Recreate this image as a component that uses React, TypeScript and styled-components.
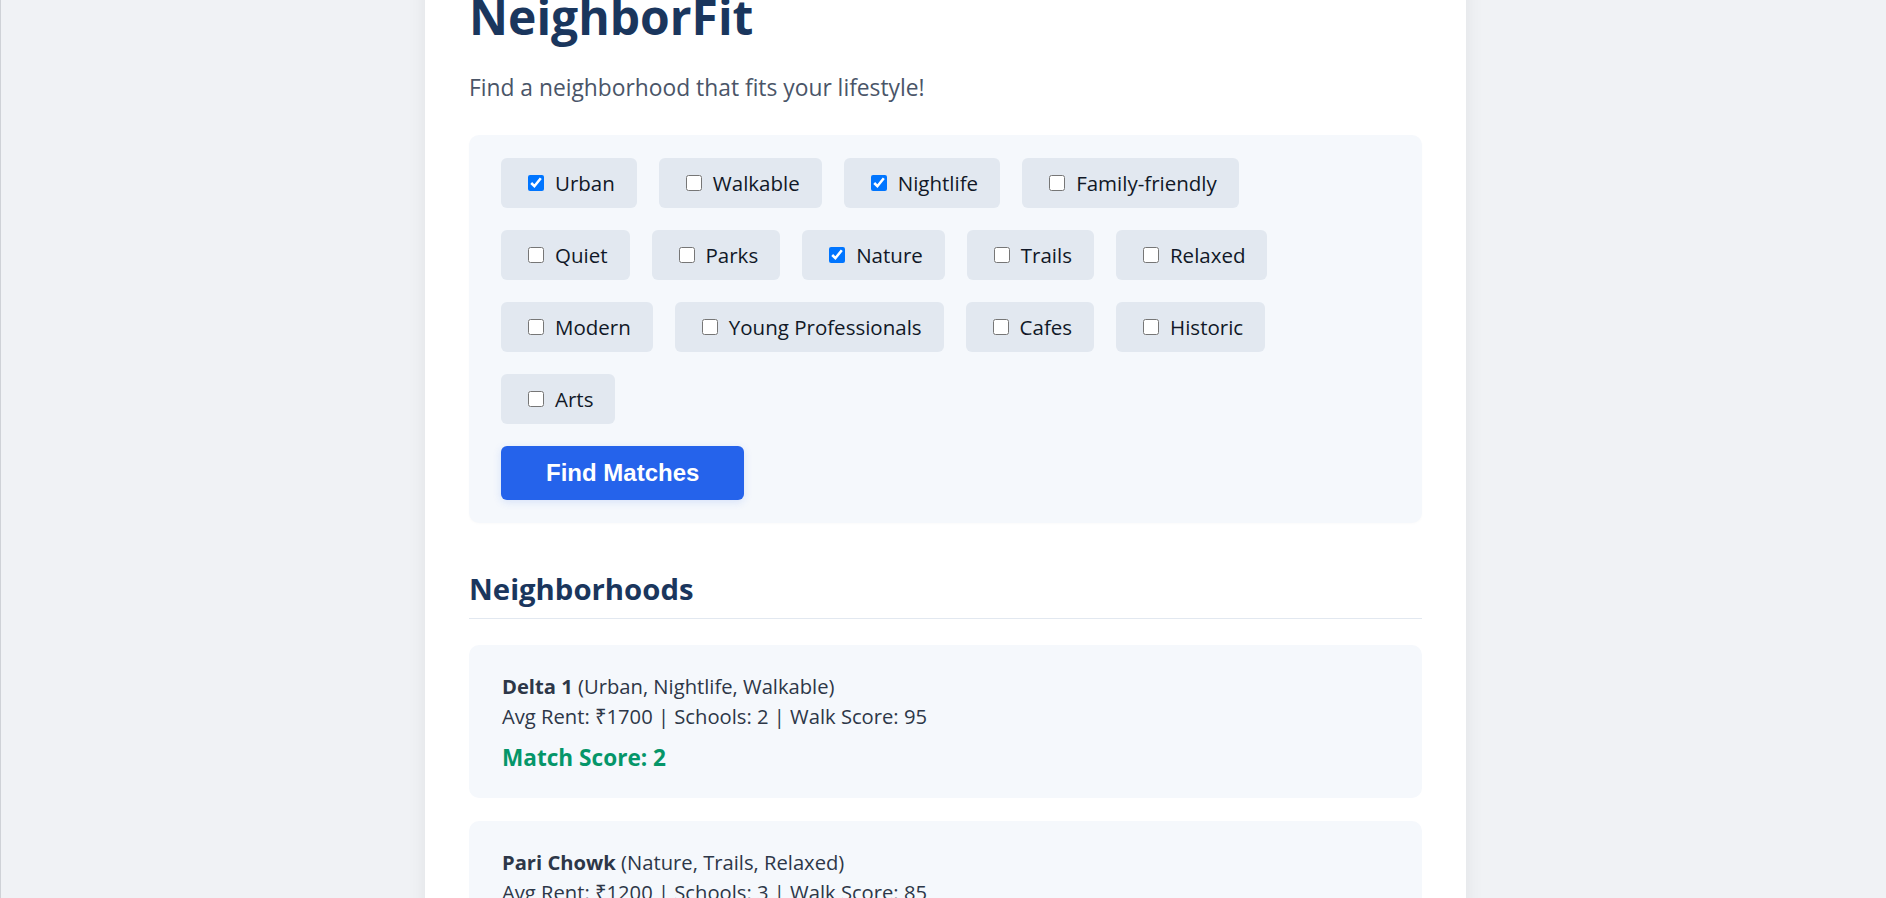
import React, { useState } from "react";
import styled, { createGlobalStyle } from "styled-components";

type Hood = {
  name: string;
  tags: string[];
  rent: number;
  schools: number;
  walk: number;
};

const TAGS = [
  "Urban",
  "Walkable",
  "Nightlife",
  "Family-friendly",
  "Quiet",
  "Parks",
  "Nature",
  "Trails",
  "Relaxed",
  "Modern",
  "Young Professionals",
  "Cafes",
  "Historic",
  "Arts",
];

const HOODS: Hood[] = [
  { name: "Delta 1", tags: ["Urban", "Nightlife", "Walkable"], rent: 1700, schools: 2, walk: 95 },
  { name: "Pari Chowk", tags: ["Nature", "Trails", "Relaxed"], rent: 1200, schools: 3, walk: 85 },
  { name: "Knowledge Park", tags: ["Modern", "Young Professionals", "Cafes"], rent: 1500, schools: 4, walk: 78 },
  { name: "Alpha 2", tags: ["Quiet", "Parks", "Family-friendly"], rent: 1300, schools: 5, walk: 70 },
];

const App = () => {
  const [picked, setPicked] = useState<string[]>(["Urban", "Nightlife", "Nature"]);

  const toggle = (tag: string) => {
    setPicked((prev) =>
      prev.includes(tag) ? prev.filter((t) => t !== tag) : [...prev, tag]
    );
  };

  const scored = HOODS.map((h) => ({
    ...h,
    score: h.tags.filter((t) => picked.includes(t)).length,
  })).sort((a, b) => b.score - a.score);

  return (
    <Page>
      <GlobalStyle />
      <Container>
        <Title>NeighborFit</Title>
        <Subtitle>Find a neighborhood that fits your lifestyle!</Subtitle>

        <Panel>
          <TagList>
            {TAGS.map((tag) => (
              <Chip key={tag}>
                <Box
                  type="checkbox"
                  checked={picked.includes(tag)}
                  onChange={() => toggle(tag)}
                />
                {tag}
              </Chip>
            ))}
          </TagList>
          <FindButton>Find Matches</FindButton>
        </Panel>

        <SectionTitle>Neighborhoods</SectionTitle>
        <CardList>
          {scored.map((h) => (
            <Card key={h.name}>
              <div>
                <strong>{h.name}</strong> ({h.tags.join(", ")})
              </div>
              <div>
                Avg Rent: ₹{h.rent} | Schools: {h.schools} | Walk Score: {h.walk}
              </div>
              <Score>Match Score: {h.score}</Score>
            </Card>
          ))}
        </CardList>
      </Container>
    </Page>
  );
};
export default App;

const GlobalStyle = createGlobalStyle`
  html, body {
    margin: 0;
    padding: 0;
  }
  body {
    background: #f0f2f5;
    border-left: 1px solid #cfd2d7;
    font-family: "Open Sans", "Noto Sans", sans-serif;
  }
`;

// the page is shown scrolled down a little
const Page = styled.div`
  padding-left: 4px;
  margin-top: -51px;
`;

const Container = styled.div`
  width: 1041px;
  box-sizing: border-box;
  margin: 0 auto;
  padding: 39.5px 44px 44px;
  background: #fff;
  box-shadow: 0 0 18px rgba(0, 0, 0, 0.07);
  min-height: 1000px;
`;

const Title = styled.h1`
  margin: 0;
  font-size: 48px;
  line-height: 56px;
  font-weight: 700;
  color: #1a365d;
`;

const Subtitle = styled.p`
  margin: 27px 0 31.5px;
  font-size: 22.8px;
  line-height: 32px;
  color: #4a5568;
`;

const Panel = styled.div`
  background: #f5f8fc;
  border-radius: 10px;
  padding: 22.5px 32px 23px;
  box-shadow: 0 1px 3px rgba(0, 0, 0, 0.02);
`;

const TagList = styled.div`
  display: flex;
  flex-wrap: wrap;
  gap: 22px;
  max-width: 840px;
`;

const Chip = styled.label`
  display: inline-flex;
  align-items: center;
  height: 50px;
  box-sizing: border-box;
  padding: 0 22px;
  background: #e2e8f0;
  border-radius: 6px;
  font-size: 20.5px;
  color: #111827;
  cursor: pointer;
`;

const Box = styled.input`
  width: 16px;
  height: 16px;
  margin: 0 11px 0 5px;
`;

const FindButton = styled.button`
  display: block;
  margin-top: 22.5px;
  padding: 13px 45px;
  font-family: "Liberation Sans", Arial, sans-serif;
  font-size: 24px;
  font-weight: 700;
  line-height: 27.6px;
  color: #fff;
  background: #2563eb;
  border: none;
  border-radius: 6px;
  box-shadow: 0 2px 8px rgba(37, 99, 235, 0.15);
  cursor: pointer;
`;

const SectionTitle = styled.h2`
  margin: 48.5px 0 0;
  padding-bottom: 11px;
  font-size: 29.3px;
  line-height: 36px;
  font-weight: 700;
  color: #1a365d;
  border-bottom: 1px solid #e2e8f0;
`;

const CardList = styled.div`
  display: flex;
  flex-direction: column;
  gap: 23.4px;
  margin-top: 26px;
`;

const Card = styled.div`
  background: #f5f8fc;
  border-radius: 10px;
  padding: 25.5px 33px 25px;
  font-size: 20.2px;
  line-height: 30px;
  color: #2d3748;

  strong {
    font-weight: 700;
  }
`;

const Score = styled.div`
  margin-top: 12.5px;
  font-size: 22.6px;
  line-height: 30px;
  font-weight: 700;
  color: #059669;
`;
